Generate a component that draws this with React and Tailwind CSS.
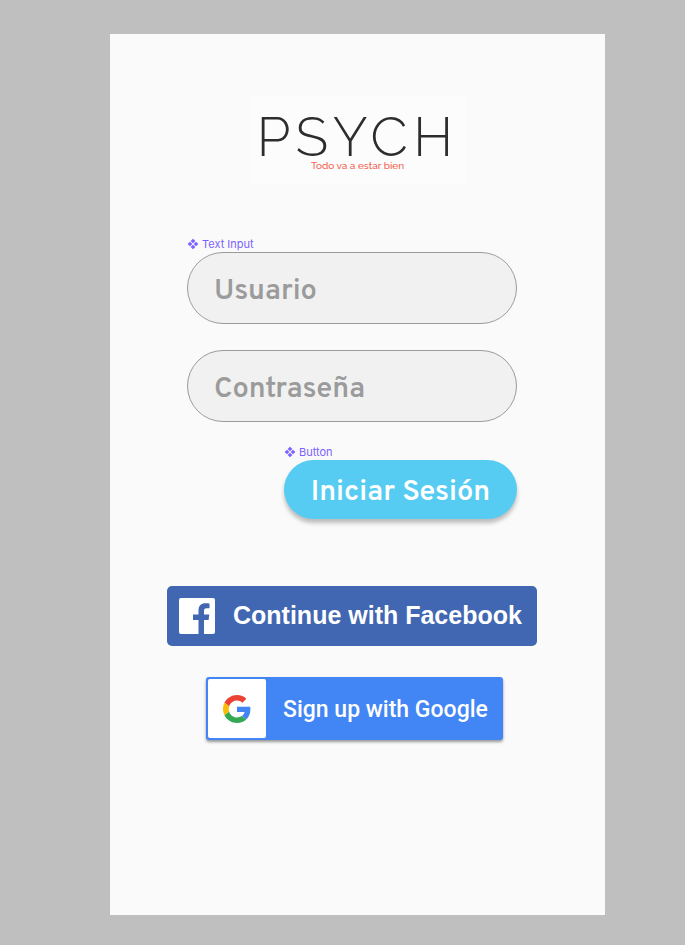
function ComponentMark() {
  return (
    <svg viewBox="0 0 12 12" className="size-3 shrink-0" fill="currentColor" stroke="currentColor" strokeWidth="0.5" strokeLinejoin="round" aria-hidden="true">
      <path d="M6 0.900 8.100 3 6 5.100 3.900 3ZM6 6.900 8.100 9 6 11.100 3.900 9ZM3 3.900 5.100 6 3 8.100 0.900 6ZM9 3.900 11.100 6 9 8.100 6.900 6Z" />
    </svg>
  );
}

function FacebookLogo() {
  return (
    <svg viewBox="0 0 36 36" className="size-9 shrink-0" aria-hidden="true">
      <rect width="36" height="36" rx="2" fill="#fff" />
      <path
        d="M19.500 36V22H14v-5.500h5.500v-4.200C19.500 7.700 22.300 5.200 26.400 5.200c1.900 0 3.600.1 4.100.2v4.900h-2.800c-2.200 0-2.700 1.100-2.700 2.600v3.600h5.300L29.600 22H25v14Z"
        fill="#4267b2"
      />
    </svg>
  );
}

function GoogleLogo() {
  return (
    <svg viewBox="0 0 48 48" className="size-7 shrink-0" aria-hidden="true">
      <path fill="#EA4335" d="M24 9.500c3.540 0 6.710 1.220 9.210 3.600l6.850-6.850C35.900 2.380 30.470 0 24 0 14.620 0 6.510 5.380 2.560 13.220l7.980 6.190C12.430 13.720 17.740 9.500 24 9.500z" />
      <path fill="#4285F4" d="M46.980 24.550c0-1.570-.15-3.090-.38-4.550H24v9.020h12.940c-.58 2.960-2.260 5.480-4.780 7.180l7.730 6c4.510-4.180 7.090-10.360 7.090-17.650z" />
      <path fill="#FBBC05" d="M10.530 28.590c-.48-1.450-.76-2.990-.76-4.590s.27-3.140.76-4.590l-7.980-6.190C.92 16.460 0 20.120 0 24c0 3.880.92 7.540 2.560 10.780l7.970-6.190z" />
      <path fill="#34A853" d="M24 48c6.480 0 11.930-2.130 15.890-5.810l-7.730-6c-2.150 1.450-4.920 2.300-8.160 2.300-6.260 0-11.570-4.220-13.470-9.910l-7.980 6.190C6.510 42.620 14.620 48 24 48z" />
    </svg>
  );
}

const field =
  "h-[72px] w-full rounded-full border border-[#9b9b9b] bg-[#f1f1f1] px-[26px] pt-1.5 font-[Overpass,Inter,sans-serif] text-[29px] font-semibold text-[#555555] outline-none placeholder:text-[#9b9b9b] placeholder:opacity-100";
const tag =
  "flex h-4 items-center gap-[3px] font-[Inter,sans-serif] text-[11px] text-[#7b61ff]";

export default function App() {
  return (
    <div className="min-h-screen bg-[#bfbfbf] pt-[34px] pr-20 pb-[30px] pl-[110px]">
      <main className="bg-[#fafafa] pt-[62px] pb-[175px]">
        <header className="mx-auto flex h-[88px] w-[214px] flex-col items-center bg-[#fcfcfc] pt-[21px]">
          <h1 className="font-[Raleway,Lato,sans-serif] text-[54px] leading-10 font-light tracking-widest text-[#2d2d2d]">
            PSYCH
          </h1>
          <p className="font-[Raleway,Lato,sans-serif] text-[10px] leading-[18px] font-medium text-[#f4604f]">
            Todo va a estar bien
          </p>
        </header>

        <div className="flex flex-col pt-[52px] pr-[68px] pl-[57px]">
          <form className="flex flex-col px-5" onSubmit={(e) => e.preventDefault()}>
            <label htmlFor="user" className={tag}>
              <ComponentMark />
              Text Input
            </label>
            <input id="user" type="text" placeholder="Usuario" className={field} />
            <input
              id="password"
              type="password"
              aria-label="Contraseña"
              placeholder="Contraseña"
              className={`${field} mt-[26px]`}
            />
            <div className="mt-[22px] flex w-[233px] flex-col self-end">
              <span className={tag}>
                <ComponentMark />
                Button
              </span>
              <button
                type="submit"
                className="h-[59px] rounded-full bg-[#56ccf2] pt-1.5 font-[Overpass,Inter,sans-serif] text-[29px] font-semibold whitespace-nowrap text-white shadow-[0_4px_4px_rgba(0,0,0,0.25)]"
              >
                Iniciar Sesión
              </button>
            </div>
          </form>

          <button
            type="button"
            className="mt-[67px] flex h-[60px] items-center gap-[18px] rounded-[5px] bg-[#4267b2] px-3 font-['Liberation_Sans',sans-serif] text-[25px] font-bold whitespace-nowrap text-white"
          >
            <FacebookLogo />
            Continue with Facebook
          </button>

          <button
            type="button"
            className="mt-[31px] mr-[34px] ml-[39px] flex h-[63px] items-center gap-[17px] rounded-[3px] bg-[#4285f4] p-0.5 font-[Roboto,sans-serif] text-[23px] font-medium whitespace-nowrap text-white shadow-[0_2px_3px_rgba(0,0,0,0.4)]"
          >
            <span className="flex h-full w-[58px] items-center justify-center rounded-[2px] bg-white">
              <GoogleLogo />
            </span>
            <span className="pt-1">Sign up with Google</span>
          </button>
        </div>
      </main>
    </div>
  );
}
